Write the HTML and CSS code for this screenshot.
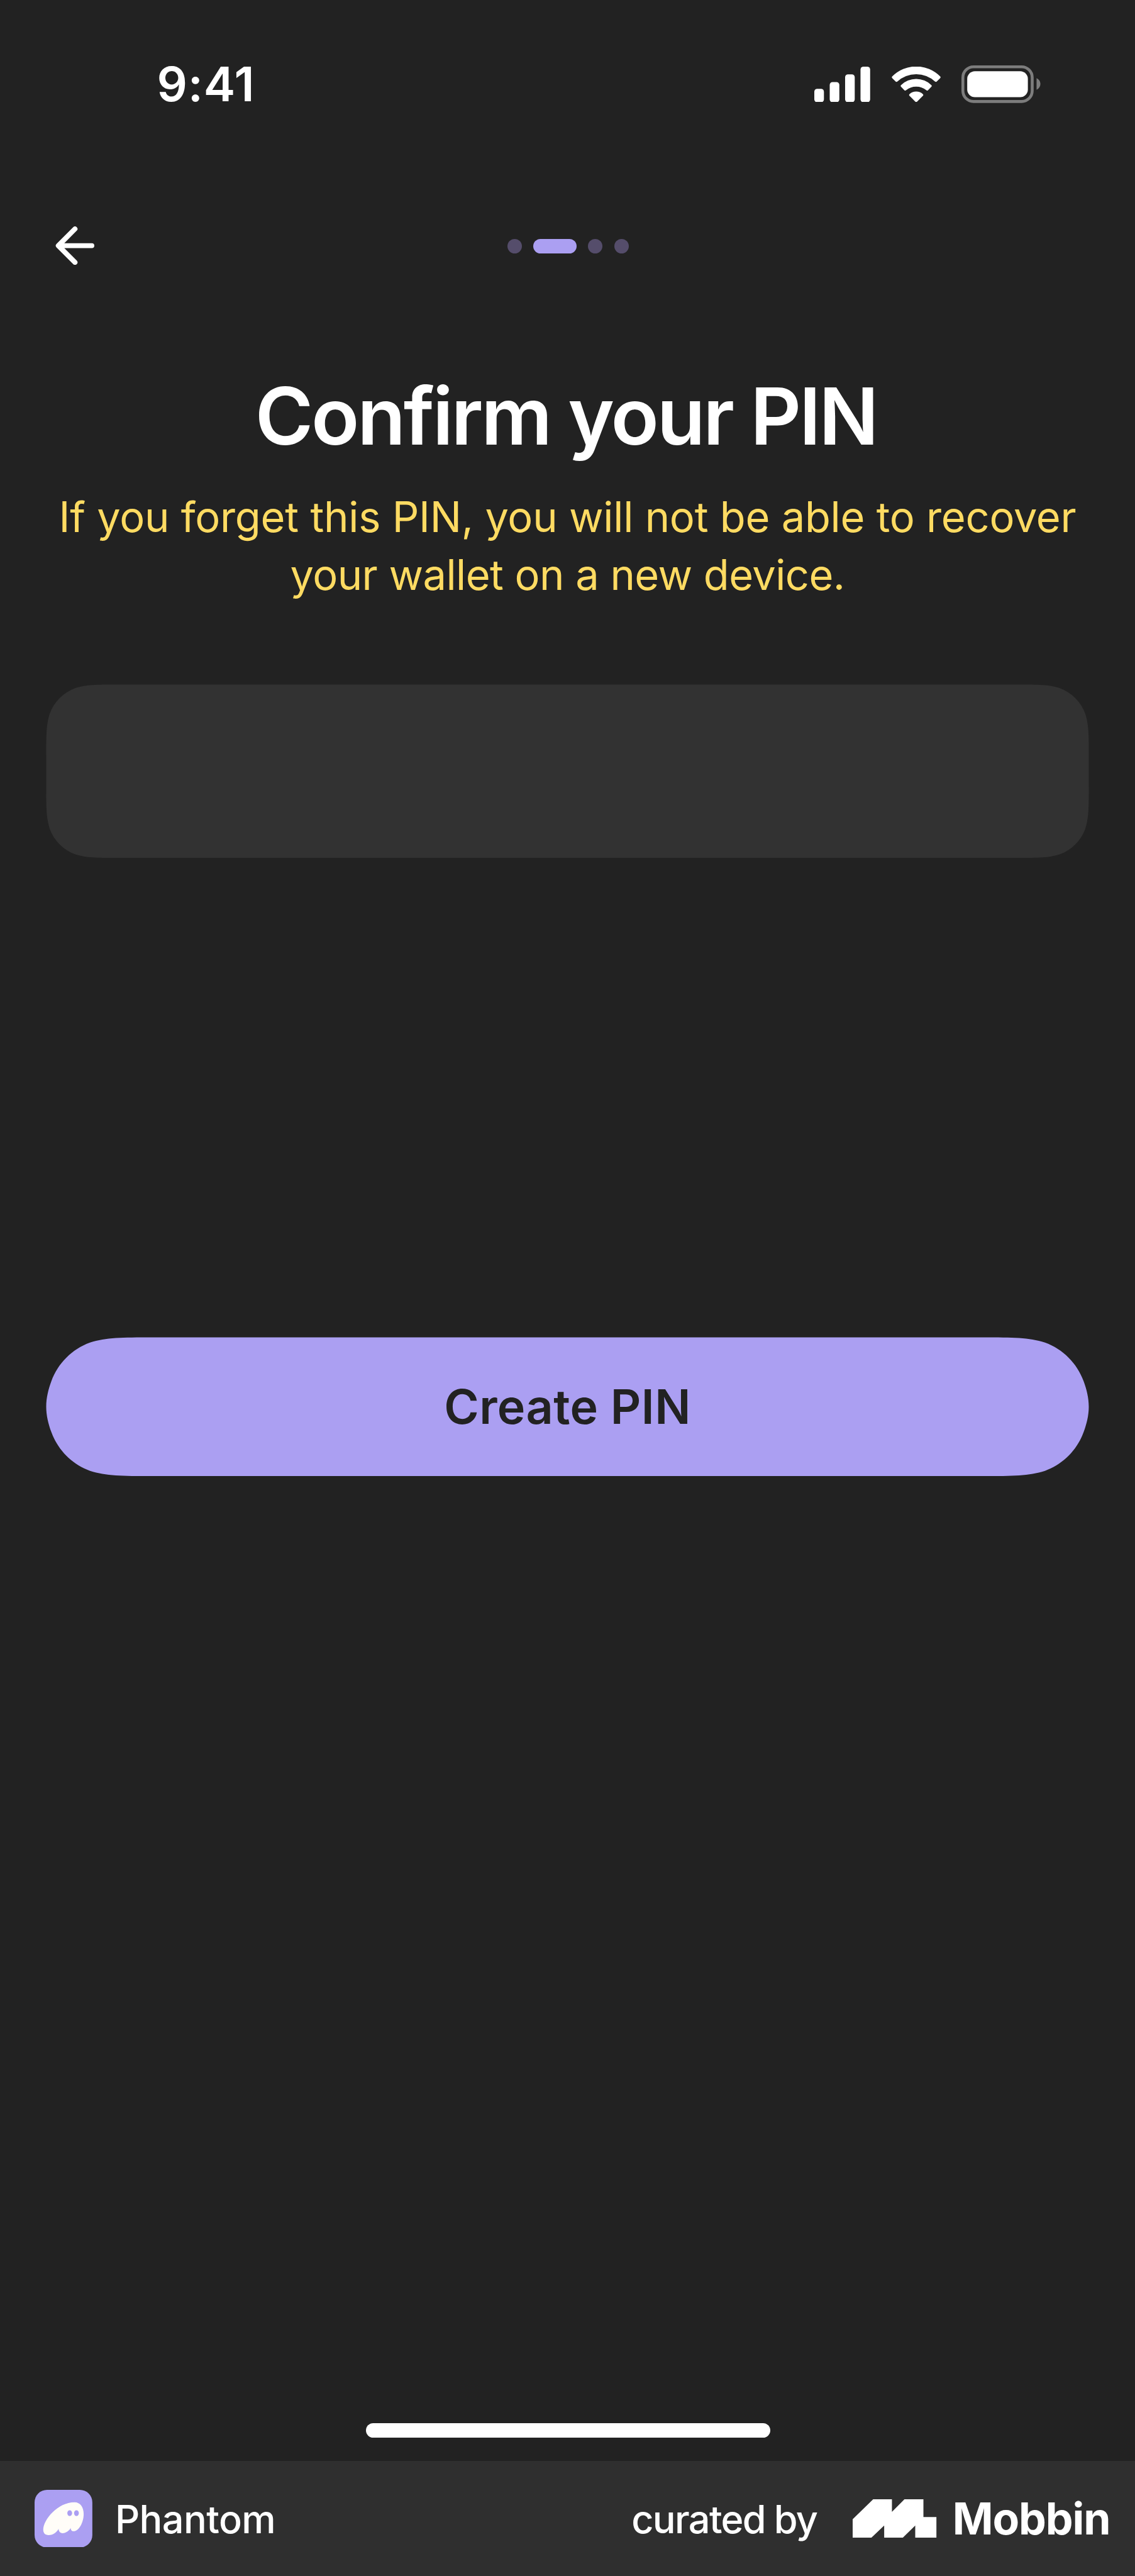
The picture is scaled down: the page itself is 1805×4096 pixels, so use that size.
FILE: index.html
```html
<!DOCTYPE html>
<html lang="en">
<head>
<meta charset="utf-8">
<title>Confirm your PIN</title>
<link rel="stylesheet" href="styles.css">
</head>
<body>
<div class="screen">
  <div class="status-bar">
    <span class="time">9:41</span>
    <div class="status-icons">
      <svg class="icon-signal" viewBox="0 0 116 74" fill="#fff"><rect y="46" width="20" height="28" rx="6"/><rect x="32" y="32" width="20" height="42" rx="6"/><rect x="64" y="16" width="20" height="58" rx="6"/><rect x="96" width="20" height="74" rx="6"/></svg>
      <svg class="icon-wifi" viewBox="0 0 102 74" fill="#fff"><path d="M1.2 20.3A70 70 0 0 1 100.8 20.3Q102.500 22 100.800 23.700L93.500 31Q92 32.300 90.300 31A58 58 0 0 0 11.700 31Q10 32.300 8.500 31L1.200 23.700Q-.500 22 1.200 20.300Z"/><path d="M19.300 38.400A45.500 45.500 0 0 1 82.700 38.400Q84.200 40 82.700 41.600L75.500 49Q74 50.400 72.200 49A33.500 33.500 0 0 0 29.800 49Q28 50.400 26.500 49L19.300 41.600Q17.800 40 19.300 38.400Z"/><path d="M37 57A21 21 0 0 1 65 57Q66.500 58.700 65 60.300L52.300 73.200Q51 74.400 49.700 73.200L37 60.300Q35.500 58.700 37 57Z"/></svg>
      <svg class="icon-battery" viewBox="0 0 165 78"><rect x="3" y="3" width="144" height="72" rx="22" fill="none" stroke="#7d7d7d" stroke-width="6"/><rect x="12" y="12" width="126" height="54" rx="16" fill="#fff"/><path d="M156 26.500C160.500 28.500 164 33 164 38.500S160.500 48.500 156 50.500Z" fill="#7d7d7d"/></svg>
    </div>
  </div>
  <div class="nav">
    <svg class="icon-back" viewBox="0 0 82 80" fill="none" stroke="#fff" stroke-width="10.4" stroke-linecap="round" stroke-linejoin="round"><path d="M6.500 40H75.800M40.800 5.300L6.200 40L40.800 74.700"/></svg>
    <div class="steps"><i class="dot"></i><i class="dot active"></i><i class="dot"></i><i class="dot"></i></div>
  </div>
  <main class="content">
    <h1 class="title">Confirm your PIN</h1>
    <p class="warning"><span class="line-first">If you forget this PIN, you will not be able to recover</span><br><span class="line-last">your wallet on a new device.</span></p>
    <input class="pin-field" type="password" aria-label="PIN">
    <button class="create">Create PIN</button>
  </main>
  <div class="home-indicator"></div>
  <footer class="footer">
    <svg class="app-icon" viewBox="0 0 120 120"><rect width="120" height="120" rx="26" fill="#ab9ff2"/><path d="M83 25.700C95 25.700 102 36 102 50C102 68 92 86 81 86C77 86 75 83 75 79C73 84 65 90 58 90C53 90 50 86 50 81C46 88 39 94 29 94C22 94 18 90 18 83C18 62 48 25.700 83 25.700Z" fill="#fffdf8"/><ellipse cx="73" cy="48.500" rx="5" ry="6" fill="#ab9ff2"/><ellipse cx="87" cy="48.500" rx="5" ry="6" fill="#ab9ff2"/></svg>
    <span class="app-name">Phantom</span>
    <span class="curated">curated by</span>
    <svg class="mobbin-mark" viewBox="0 0 174 80" fill="#fff"><path d="M0 41.500L42.600 0H81.600V26L107.600 0H147V37H174V80H130V54.500L104 80H65.500V54.500L38.700 80H0Z"/></svg>
    <span class="mobbin">Mobbin</span>
  </footer>
</div>
</body>
</html>
```
FILE: styles.css
```css
/* 1rem = 100 design units; the screen is 23.58rem wide */
html { font-size: 76.548px; background: #222; }
* { box-sizing: border-box; }
body { margin: 0; font-family: Inter, "Liberation Sans", sans-serif; color: #fff; font-size: 1rem; }
.screen { width: 100%; height: 4096px; display: flex; flex-direction: column; overflow: hidden; background: #222; }
svg { display: block; flex: none; }

.status-bar { height: 3.5rem; flex: none; display: flex; align-items: center; justify-content: space-between; padding: 0 1.95rem 0 3.26rem; }
.time { font-size: .99rem; font-weight: 600; letter-spacing: .75px; white-space: nowrap; }
.status-icons { display: flex; align-items: center; }
.icon-signal { width: 1.16rem; height: .74rem; }
.icon-wifi { width: 1.02rem; height: .74rem; margin-left: .44rem; }
.icon-battery { width: 1.65rem; height: .78rem; margin-left: .44rem; }

.nav { height: 3.22rem; flex: none; display: grid; grid-template-columns: 1fr auto 1fr; align-items: center; padding: 0 1.13rem 0 1.15rem; }
.icon-back { width: .82rem; height: .8rem; margin-bottom: .02rem; }
.steps { display: flex; gap: .24rem; }
.dot { width: .3rem; height: .3rem; border-radius: .15rem; background: #554d6b; }
.dot.active { width: .9rem; background: #ab9ff2; }

.content { flex: 1; display: flex; flex-direction: column; padding: 1.023rem .96rem 0; }
.title { margin: 0; padding-right: .063rem; font-size: 1.64rem; line-height: 1.8rem; font-weight: 600; letter-spacing: -3.28px; text-align: center; white-space: nowrap; }
.warning { margin: .597rem 0 0; font-size: .873rem; line-height: 1.2rem; font-weight: 400; text-align: center; white-space: nowrap; color: #ffdb62; }
.line-first { letter-spacing: -.26px; }
.line-last { letter-spacing: -.567px; }
.pin-field { width: 100%; height: 3.6rem; margin: 1.68rem 0 0; padding: 0 .96rem; border: 0; outline: 0; background: #323232; color: #fff; font: inherit;
  clip-path: path("M112.36 0H1545.64C1578 0 1594.17 0 1611.59 5.51C1630.6 12.43 1645.57 27.4 1652.49 46.41C1658 63.83 1658 80 1658 112.36V163.24C1658 195.6 1658 211.77 1652.49 229.19C1645.57 248.2 1630.6 263.17 1611.59 270.09C1594.17 275.6 1578 275.6 1545.64 275.6H112.36C80 275.6 63.83 275.6 46.41 270.09C27.4 263.17 12.43 248.2 5.51 229.19C0 211.77 0 195.6 0 163.24V112.36C0 80 0 63.83 5.51 46.41C12.43 27.4 27.4 12.43 46.41 5.51C63.83 0 80 0 112.36 0Z"); }
.create { width: 100%; height: 2.88rem; margin: 9.96rem 0 0; padding: 0; border: 0; background: #ab9ff2; color: #222; font: 600 .985rem Inter, "Liberation Sans", sans-serif; letter-spacing: .4px; text-align: center;
  clip-path: path("M168.5 0H1489.5C1538.02 0 1562.28 0 1588.39 8.26C1616.9 18.64 1639.36 41.1 1649.74 69.61C1654.7 82.9 1658 96.45 1658 110.23C1658 124.01 1654.7 137.56 1649.74 150.85C1639.36 179.36 1616.9 201.82 1588.39 212.2C1562.28 220.46 1538.02 220.46 1489.5 220.46H168.5C119.98 220.46 95.72 220.46 69.61 212.2C41.1 201.82 18.64 179.36 8.26 150.85C3.3 137.56 0 124.01 0 110.23C0 96.45 3.3 82.9 8.26 69.61C18.64 41.1 41.1 18.64 69.61 8.26C95.72 0 119.98 0 168.5 0Z"); }

.home-indicator { flex: none; align-self: center; width: 8.4rem; height: .3rem; margin: 0 0 .48rem .02rem; border-radius: .15rem; background: #fff; }

.footer { flex: none; height: 2.39rem; display: flex; align-items: center; padding: 0 .516rem 0 .72rem; background: #2f2f2f; white-space: nowrap; }
.app-icon { width: 1.2rem; height: 1.2rem; }
.app-name { margin-left: .47rem; padding-top: .05rem; font-size: .8rem; font-weight: 500; letter-spacing: -.58px; }
.curated { margin-left: auto; padding-top: .05rem; font-size: .8rem; font-weight: 500; letter-spacing: -1.65px; word-spacing: -.8px; }
.mobbin-mark { width: 1.74rem; height: .8rem; margin-left: .745rem; }
.mobbin { margin-left: .328rem; font-size: .91rem; font-weight: 700; letter-spacing: -1.14px; }
```
